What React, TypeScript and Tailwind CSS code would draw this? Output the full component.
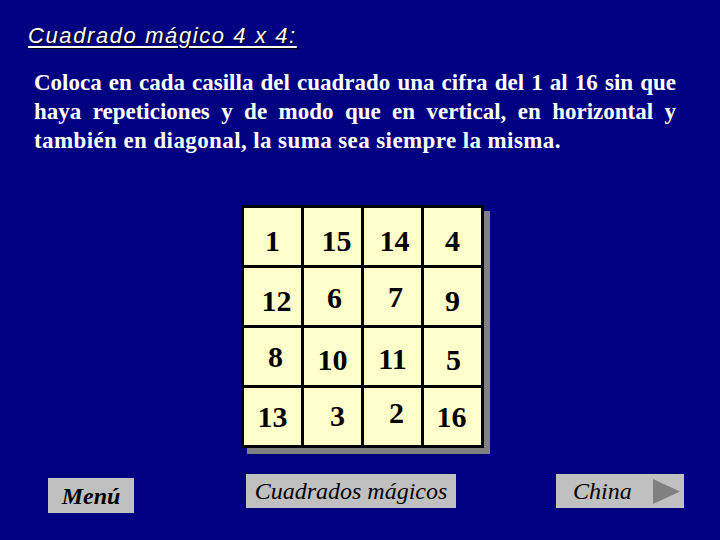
const rows: { n: string; cls: string }[][] = [
  [
    { n: '1', cls: 'translate-y-[4px]' },
    { n: '15', cls: 'translate-x-[4px] translate-y-[4px]' },
    { n: '14', cls: 'translate-x-[2px] translate-y-[4px]' },
    { n: '4', cls: 'translate-y-[4px]' },
  ],
  [
    { n: '12', cls: 'translate-x-[4px] translate-y-[4px]' },
    { n: '6', cls: 'translate-x-[2px] translate-y-[1px]' },
    { n: '7', cls: 'translate-x-[3px]' },
    { n: '9', cls: 'translate-y-[4px]' },
  ],
  [
    { n: '8', cls: 'translate-x-[3px]' },
    { n: '10', cls: 'translate-y-[3px]' },
    { n: '11', cls: 'translate-y-[2px]' },
    { n: '5', cls: 'translate-x-[1px] translate-y-[3px]' },
  ],
  [
    { n: '13', cls: '' },
    { n: '3', cls: 'translate-x-[5px] -translate-y-[1px]' },
    { n: '2', cls: 'translate-x-[4px] -translate-y-[4px]' },
    { n: '16', cls: '-translate-x-[1px]' },
  ],
];

const serif = "font-['Liberation_Serif','Times_New_Roman',serif]";

export default function App() {
  return (
    <div className={`w-[720px] h-[540px] bg-[#000080] overflow-hidden flex flex-col ${serif}`}>
      {/* titulo */}
      <h1 className="ml-[28px] mt-[22px] h-[28px] font-['Liberation_Sans',Arial,sans-serif] italic text-[22px] leading-[28px] tracking-[1.6px] text-white underline underline-offset-[3px] decoration-[2px] [text-shadow:1px_1px_1px_#000]">
        Cuadrado mágico 4 x 4:
      </h1>

      {/* enunciado */}
      <div className="ml-[34px] mr-[44px] mt-[18px] text-white font-bold text-[23px] leading-[29px]">
        <p className="whitespace-nowrap text-justify [text-align-last:justify]">
          Coloca en cada casilla del cuadrado una cifra del 1 al 16 sin que
        </p>
        <p className="whitespace-nowrap text-justify [text-align-last:justify]">
          haya repeticiones y de modo que en vertical, en horizontal y
        </p>
        <p className="whitespace-nowrap tracking-[0.4px]">
          también en diagonal, la suma sea siempre la misma.
        </p>
      </div>

      {/* cuadrado */}
      <div className="ml-[241px] mt-[50px] w-[249px] h-[249px]">
        <div className="grid grid-cols-4 gap-[3px] p-[3px] bg-black w-[243px] shadow-[6px_6px_0_#808080]">
          {rows.flat().map((c, i) => (
            <div key={i} className="h-[57px] bg-[#ffffcc] flex items-center justify-center">
              <span className={`text-[30px] leading-none font-bold text-black ${c.cls}`}>{c.n}</span>
            </div>
          ))}
        </div>
      </div>

      {/* botones */}
      <div className="flex items-start mt-[20px]">
        <div className="ml-[48px] mt-[4px] w-[86px] h-[35px] bg-[#c0c0c0] flex items-center justify-center">
          <span className="italic font-bold text-[24px] leading-none text-black">Menú</span>
        </div>
        <div className="ml-[112px] w-[210px] h-[34px] bg-[#c0c0c0] flex items-center justify-center">
          <span className="italic text-[24px] leading-none text-black">Cuadrados mágicos</span>
        </div>
        <div className="ml-[100px] w-[128px] h-[34px] bg-[#c0c0c0] flex items-center pl-[17px]">
          <span className="italic text-[24px] leading-none text-black">China</span>
          <svg width="27" height="25" viewBox="0 0 27 25" className="ml-[21px]">
            <polygon points="0,0 27,12.5 0,25" fill="#808080" />
          </svg>
        </div>
      </div>
    </div>
  );
}
